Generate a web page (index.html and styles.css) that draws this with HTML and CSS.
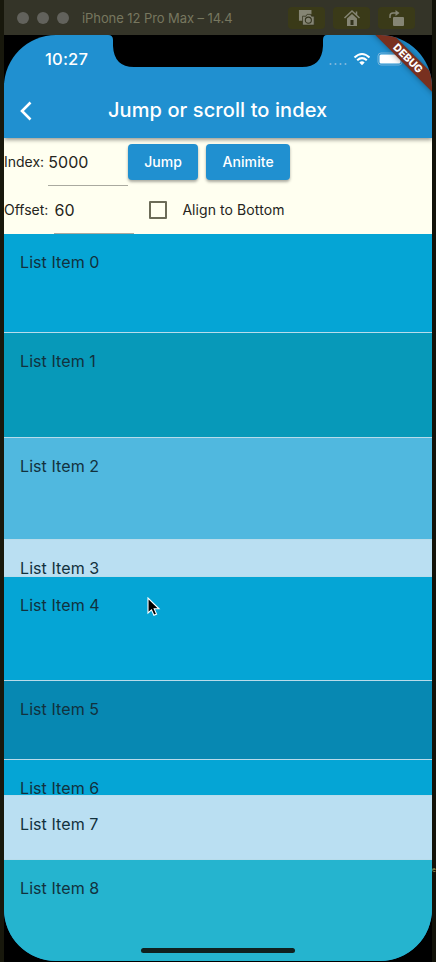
FILE: index.html
```
<!DOCTYPE html>
<html lang="en">
<head>
<meta charset="utf-8">
<title>Jump or scroll to index</title>
<link rel="stylesheet" href="styles.css">
</head>
<body>
<div class="window">
  <header class="titlebar">
    <span class="light"></span><span class="light"></span><span class="light"></span>
    <span class="device">iPhone 12 Pro Max – 14.4</span>
    <div class="tools">
      <span class="tool"><svg width="18" height="17" viewBox="0 0 20 19"><path d="M1 1h14v5h-3l-2 2H6v5H1z" fill="#858574"/><path d="M5 8h4l1-2h4l1 2h3v10H5z" fill="#858574" stroke="#33331d" stroke-width=".8"/><circle cx="11.5" cy="12.5" r="3.4" fill="none" stroke="#33331d" stroke-width="1.2"/></svg></span>
      <span class="tool"><svg width="18" height="18" viewBox="0 0 18 18"><path d="M1.5 9 9 2l7.5 7M13.5 2.5v4" fill="none" stroke="#858574" stroke-width="1.5"/><path d="M4 9.5 9 5l5 4.5V17H4z" fill="#858574"/><path d="M7.500 11h3v5h-3z" fill="#33331d"/></svg></span>
      <span class="tool"><svg width="18" height="18" viewBox="0 0 18 18"><path d="M2 9V7q0-3 3-3h4" fill="none" stroke="#858574" stroke-width="1.5"/><path d="m7.500 1 4 3-4 3z" fill="#858574"/><rect x="5" y="8" width="11" height="9" rx="1" fill="#858574"/></svg></span>
    </div>
  </header>
  <main class="screen">
    <div class="notch"><svg width="219" height="32" viewBox="0 0 219 32"><path d="M0 0Q5 0 5 5V11Q6 32 26 32H194Q214 32 215 11V5Q215 0 219 0Z"/></svg></div>
    <div class="status">
      <span class="time">10:27</span>
      <svg class="signals" width="76" height="16" viewBox="0 0 76 16"><g fill="#86b9dc"><circle cx="2.5" cy="13" r="1"/><circle cx="7.5" cy="13" r="1"/><circle cx="12.5" cy="13" r="1"/><circle cx="17.5" cy="13" r="1"/></g><g fill="none" stroke="#fff" stroke-width="2.1"><path d="M26.500 6.500q7.500-7 15 0M29.200 9.300q4.800-4.300 9.600 0"/></g><path d="M31.300 11.500q2.700-2.300 5.400 0L34 14.200z" fill="#fff"/><rect x="50" y="2" width="24" height="12" rx="3" fill="none" stroke="#75b4dc"/><rect x="51.5" y="3.5" width="21" height="9" rx="1.5" fill="#fff"/></svg>
    </div>
    <div class="debug">DEBUG</div>
    <div class="appbar">
      <svg class="back" width="14" height="22" viewBox="0 0 14 22"><path d="M12.500 2.500 4 11l8.500 8.500" fill="none" stroke="#fff" stroke-width="2.6"/></svg>
      <h1>Jump or scroll to index</h1>
    </div>
    <div class="controls">
      <div class="row"><label>Index:</label><span class="field index">5000</span><button class="jump">Jump</button><button class="animate">Animite</button></div>
      <div class="row"><label>Offset:</label><span class="field offset">60</span><span class="check"></span><span class="align">Align to Bottom</span></div>
    </div>
    <div class="list">
      <div class="item i0"><span>List Item 0</span></div>
      <div class="item i1"><span>List Item 1</span></div>
      <div class="item i2"><span>List Item 2</span></div>
      <div class="item i3"><span>List Item 3</span></div>
      <div class="item i4"><span>List Item 4</span></div>
      <div class="item i5"><span>List Item 5</span></div>
      <div class="item i6"><span>List Item 6</span></div>
      <div class="item i7"><span>List Item 7</span></div>
      <div class="item i8"><span>List Item 8</span></div>
    </div>
    <div class="home"></div>
  </main>
  <svg class="cursor" width="14" height="20" viewBox="0 0 14 20"><path d="M1 1v15l3.500-3.200 2.400 5.500 2.700-1.200-2.400-5.300H12z" fill="#000" stroke="#fff" stroke-width="1.1"/></svg>
  <div class="edge">e</div>
</div>
</body>
</html>
```
FILE: styles.css
```
* { box-sizing: border-box; }
body { margin: 0; background: #000; font-family: Inter, "Liberation Sans", sans-serif; }
.window { position: relative; width: 436px; height: 962px; padding: 0 4px; overflow: hidden; background: linear-gradient(90deg, #18180c 4px, #000 4px, #000 432px, #121209 432px); }
.titlebar { height: 35px; display: flex; align-items: center; padding-left: 13px; background: #343428; }
.light { width: 12px; height: 12px; margin-right: 8px; border-radius: 50%; background: #62625c; }
.device { margin-left: 5px; width: 206px; font-size: 13px; letter-spacing: -.08px; color: #77775f; white-space: nowrap; }
.tools { display: flex; gap: 8px; }
.tool { display: flex; align-items: center; justify-content: center; width: 37px; height: 22px; border-radius: 4px; background: #3a3a18; }
.screen { position: relative; width: 428px; height: 926px; border-radius: 52px; overflow: hidden; background: #2090d0; }
.notch { position: absolute; left: 104px; top: 0; height: 32px; }
.notch svg { display: block; }
.status { height: 48px; display: flex; align-items: center; justify-content: space-between; padding: 0 28px 0 41px; color: #fff; }
.time { font-size: 16.5px; font-weight: 500; letter-spacing: .2px; }
.debug { position: absolute; z-index: 2; right: -31px; top: 17px; width: 110px; height: 13px; transform: rotate(45deg); background: #78301f; box-shadow: 0 0 6px #0006; color: #fff; font-size: 10.5px; font-weight: 800; line-height: 13px; text-align: center; }
.appbar { position: relative; z-index: 1; height: 55px; display: flex; align-items: center; padding-left: 14px; background: #2090d0; box-shadow: 0 2px 4px #0006; clip-path: inset(0 0 -8px 0); }
.appbar h1 { margin: 0 0 1px 76px; color: #fff; font-size: 20px; font-weight: 500; letter-spacing: .09px; white-space: nowrap; }
.controls { height: 96px; overflow: hidden; background: #fffff0; color: #252520; font-size: 14px; }
.row { height: 48px; display: flex; align-items: center; white-space: nowrap; }
.row label, .align { line-height: 48px; }
.row label { letter-spacing: 0; }
.row label, .align { padding-bottom: 1px; }
.field { width: 80px; height: 48px; line-height: 48px; border-bottom: 1px solid #aaaaa0; font-size: 16px; letter-spacing: .1px; }
.index { margin-left: 4px; }
.offset { margin-left: 6px; }
.row button { display: flex; align-items: center; justify-content: center; height: 36px; padding: 0 0 2px; border: 0; border-radius: 4px; background: #2090d0; box-shadow: 0 2px 3px #0005; color: #fff; font: 500 14px Inter, sans-serif; letter-spacing: .1px; }
.row .jump { width: 70px; }
.row .animate { width: 84px; margin-left: 8px; }
.check { width: 18px; height: 18px; margin-left: 15px; border: 2px solid #6c6c58; border-radius: 1px; }
.align { margin-left: 15px; letter-spacing: .08px; }
.item { overflow: hidden; padding: 18px 16px 0; border-bottom: 1px solid #b8dceb; font-size: 16px; line-height: 20px; letter-spacing: .08px; color: #12313d; }
.i0 { height: 99px; background: #05a5d5; }
.i1 { height: 105px; background: #0799b9; }
.i2 { height: 102px; background: #50b8df; }
.i3 { height: 37px; background: #badff2; }
.i4 { height: 104px; background: #05a5d5; }
.i5 { height: 79px; background: #0788b2; }
.i6 { height: 36px; background: #05a5d5; }
.i7 { height: 64px; background: #badff2; }
.i8 { height: 106px; background: #25b4cf; }
.home { position: absolute; left: 137px; bottom: 8px; width: 154px; height: 5px; border-radius: 3px; background: #10201f; }
.cursor { position: absolute; left: 147px; top: 597px; }
.edge { position: absolute; left: 432px; top: 866px; font-size: 6.5px; line-height: 8px; color: #aaaa68; }
```
